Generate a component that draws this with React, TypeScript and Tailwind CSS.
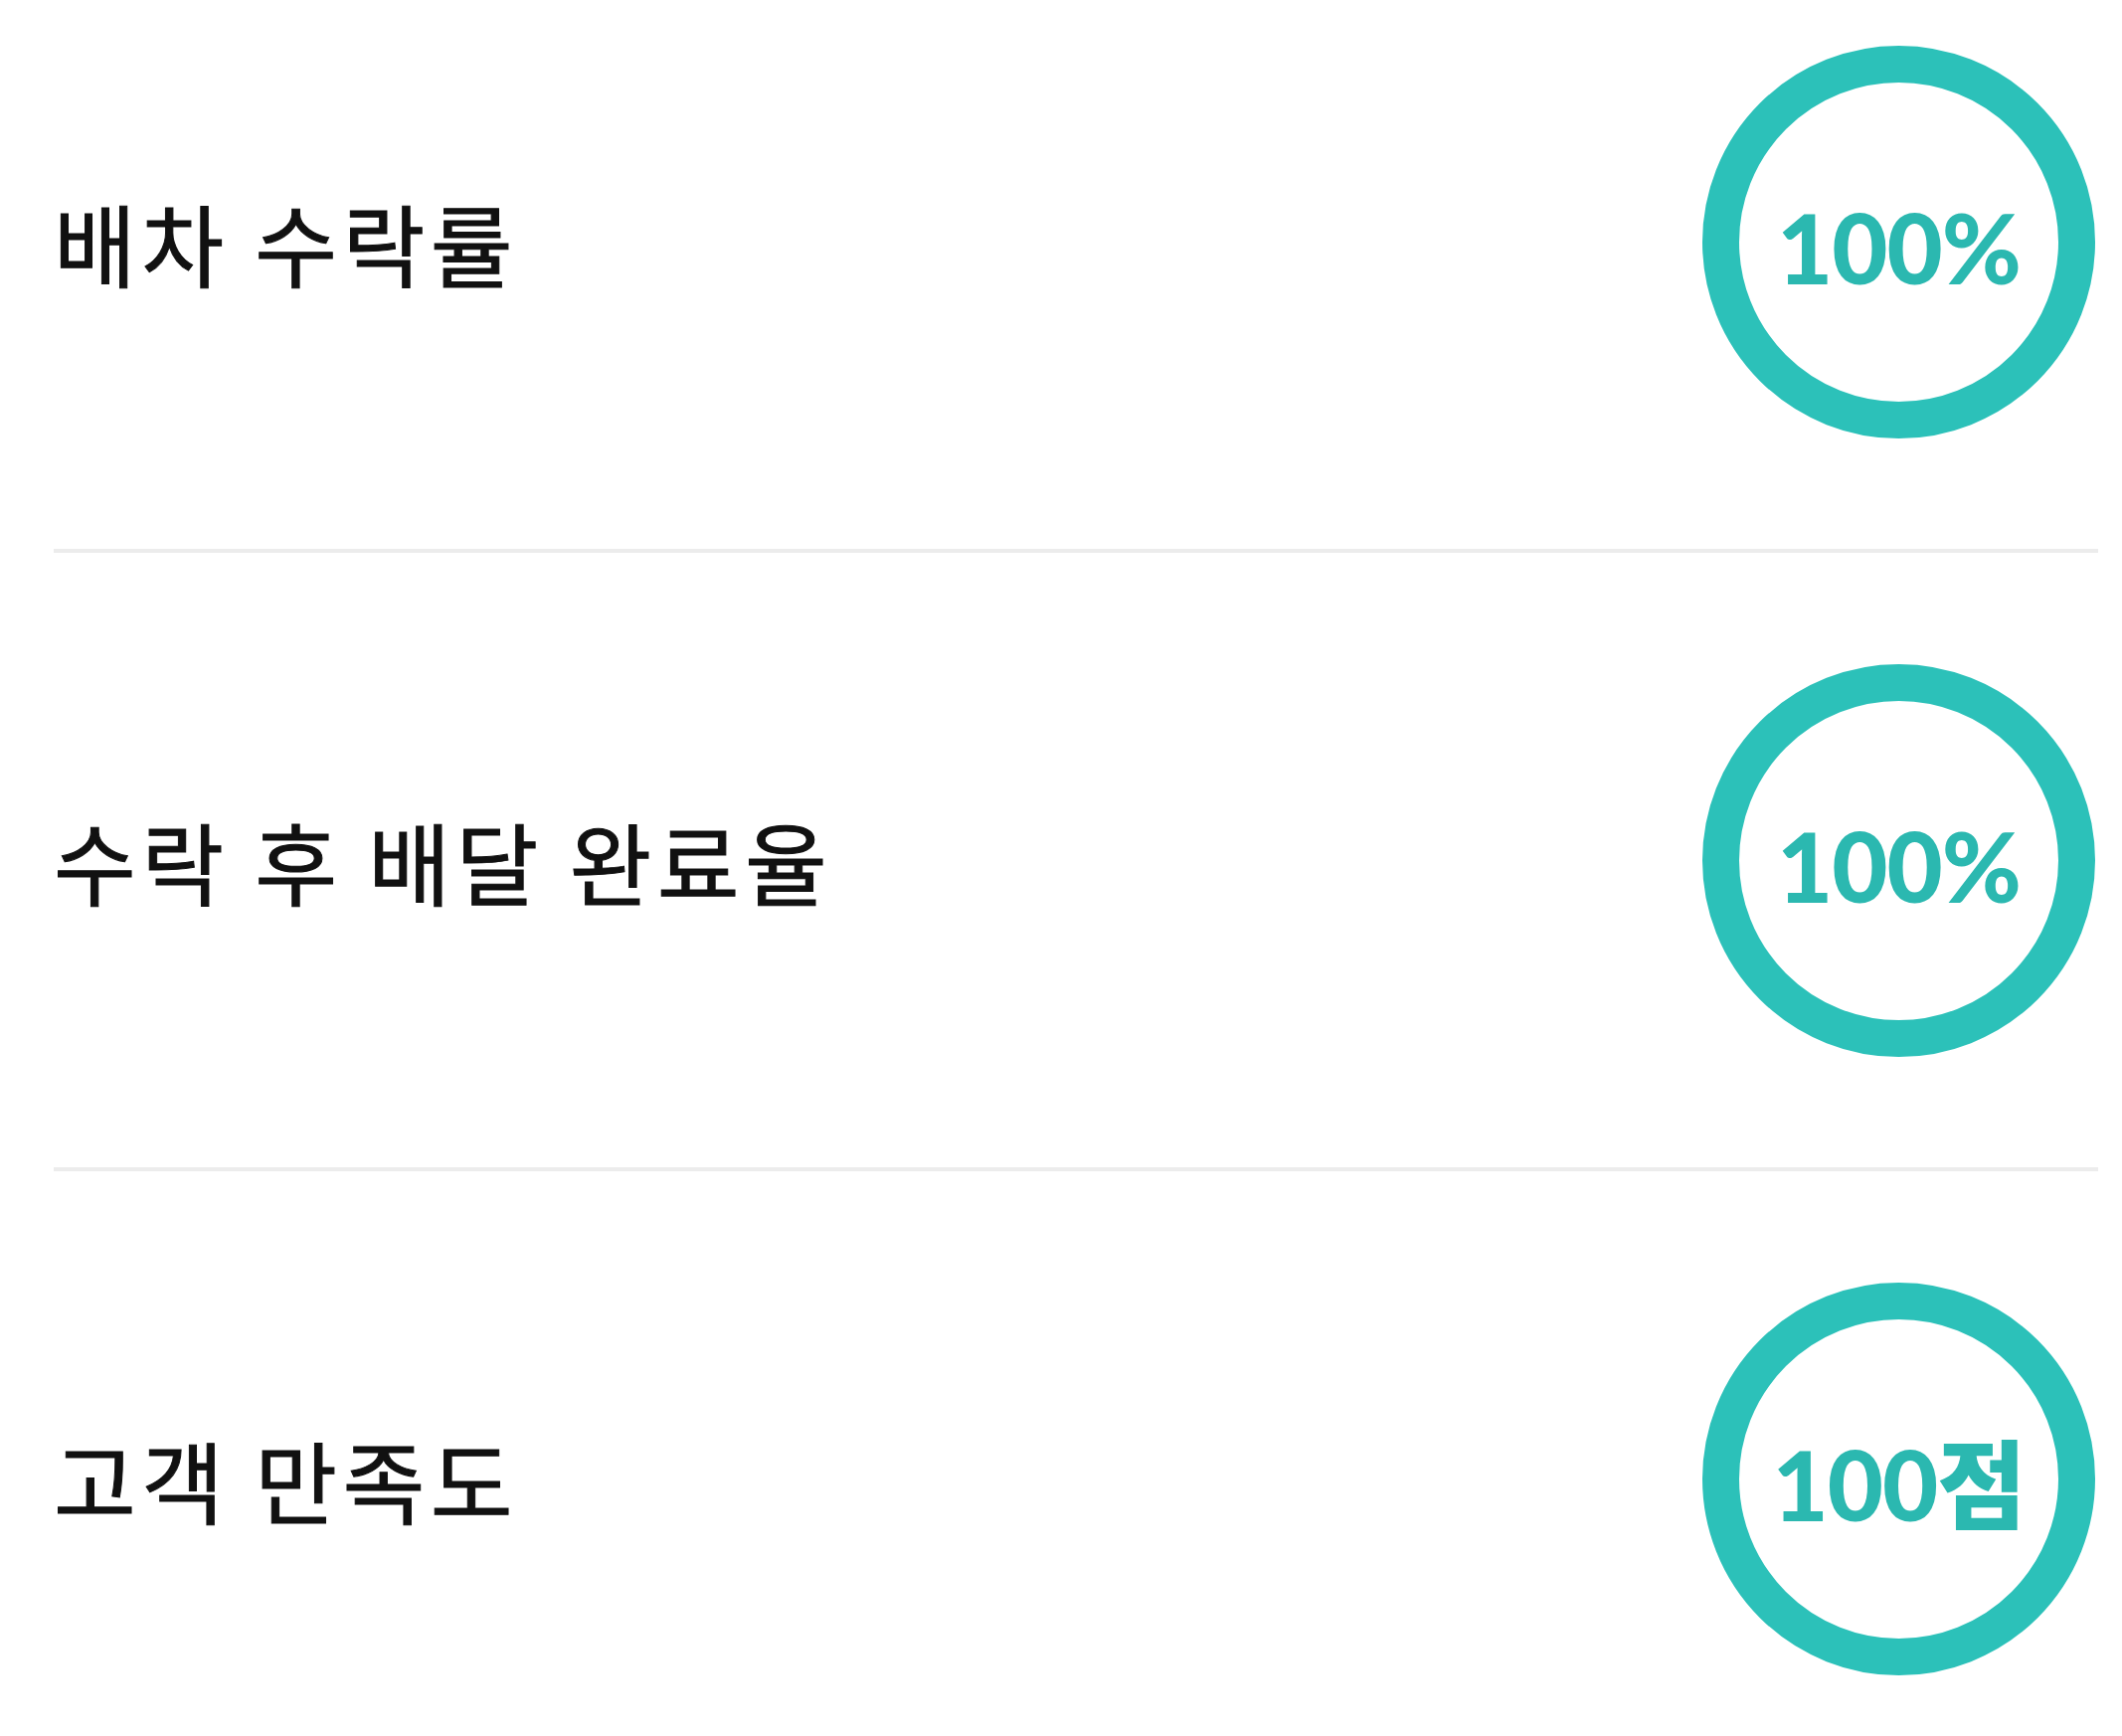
import React from "react";

const rows = [
  { label: "배차 수락률", value: "100%" },
  { label: "수락 후 배달 완료율", value: "100%" },
  { label: "고객 만족도", value: "100점" },
];

function Ring({ value }: { value: string }) {
  return (
    <div className="flex h-[395px] w-[395px] shrink-0 items-center justify-center rounded-full border-[37px] border-[#2cc1b9] bg-white">
      <span
        className="pt-[10px] text-[97px] font-black leading-none tracking-[-1px] text-[#2bb8b0]"
        style={{ fontFamily: 'Lato, "Noto Sans CJK KR", sans-serif' }}
      >
        {value}
      </span>
    </div>
  );
}

export default function App() {
  return (
    <div className="h-[1746px] w-[2134px] overflow-hidden bg-white">
      <div className="-mt-[66px] flex flex-col">
        {rows.map((r, i) => (
          <div key={i} className="flex flex-col">
            <div className="flex h-[618px] items-center justify-between pl-[54px] pr-[27px]">
              <span
                className="text-[90px] font-normal leading-none tracking-[5.5px] text-[#111111] [-webkit-text-stroke:1px_#111111]"
                style={{ fontFamily: '"Noto Sans CJK KR", sans-serif' }}
              >
                {r.label}
              </span>
              <Ring value={r.value} />
            </div>
            {i < rows.length - 1 && (
              <div className="ml-[54px] mr-[24px] h-[4px] bg-[#ececec]" />
            )}
          </div>
        ))}
      </div>
    </div>
  );
}
